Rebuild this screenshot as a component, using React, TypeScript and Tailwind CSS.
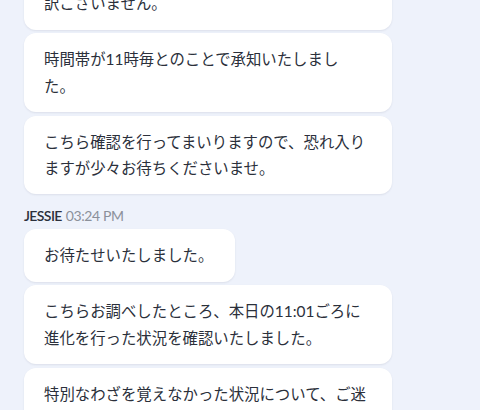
import React from 'react';

type Msg = { text: React.ReactNode; full?: boolean };

const before: Msg[] = [
  { text: <>ご不便をおかけしてしまい、大変申し<br />訳ございません。</>, full: true },
  { text: <>時間帯が11時毎とのことで承知いたしまし<br />た。</>, full: true },
  { text: 'こちら確認を行ってまいりますので、恐れ入りますが少々お待ちくださいませ。' },
];

const after: Msg[] = [
  { text: 'お待たせいたしました。' },
  { text: 'こちらお調べしたところ、本日の11:01ごろに進化を行った状況を確認いたしました。' },
  { text: '特別なわざを覚えなかった状況について、ご迷惑をおかけしてしまい申し訳ございません。' },
];

function Bubble({ children, full }: { children: React.ReactNode; full?: boolean }) {
  return (
    <div
      className={`${full ? 'w-[368px]' : 'w-fit max-w-[368px]'} rounded-[12px] bg-white py-[13px] pl-[20px] pr-[22px] text-[15.4px] leading-[26.4px] text-[#2b303b] shadow-[0_1px_2px_rgba(30,40,70,0.09)]`}
    >
      {children}
    </div>
  );
}

export default function App() {
  return (
    <div
      className="h-[410px] w-[480px] overflow-hidden bg-[#eef2fb]"
      style={{ fontFamily: 'Lato, "Noto Sans CJK JP", sans-serif' }}
    >
      <div className="mt-[-49px] flex flex-col pl-[24px]">
        <div className="flex flex-col gap-[3.5px]">
          {before.map((m, i) => (
            <Bubble key={i} full={m.full}>
              {m.text}
            </Bubble>
          ))}
        </div>

        {/* sender line */}
        <div className="mt-[12px] mb-[3px] flex h-[20px] items-center gap-[4px] text-[14px] leading-[20px]">
          <span className="font-semibold tracking-[-0.6px] text-[#2b303b]">JESSIE</span>
          <span className="tracking-[-0.4px] text-[#8b909a]">03:24 PM</span>
        </div>

        <div className="flex flex-col gap-[3.5px]">
          {after.map((m, i) => (
            <Bubble key={i}>{m.text}</Bubble>
          ))}
        </div>
      </div>
    </div>
  );
}
